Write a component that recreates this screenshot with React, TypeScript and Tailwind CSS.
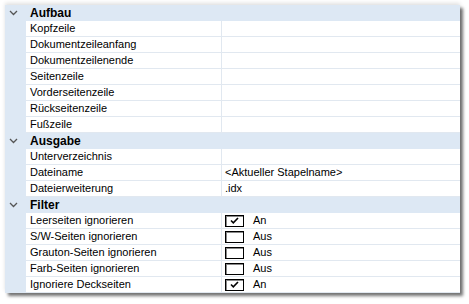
import React from "react";

type Item = { label: string; value?: string; check?: boolean };
type Group = { title: string; items: Item[] };

const groups: Group[] = [
  {
    title: "Aufbau",
    items: [
      { label: "Kopfzeile" },
      { label: "Dokumentzeileanfang" },
      { label: "Dokumentzeilenende" },
      { label: "Seitenzeile" },
      { label: "Vorderseitenzeile" },
      { label: "Rückseitenzeile" },
      { label: "Fußzeile" },
    ],
  },
  {
    title: "Ausgabe",
    items: [
      { label: "Unterverzeichnis" },
      { label: "Dateiname", value: "<Aktueller Stapelname>" },
      { label: "Dateierweiterung", value: ".idx" },
    ],
  },
  {
    title: "Filter",
    items: [
      { label: "Leerseiten ignorieren", check: true },
      { label: "S/W-Seiten ignorieren", check: false },
      { label: "Grauton-Seiten ignorieren", check: false },
      { label: "Farb-Seiten ignorieren", check: false },
      { label: "Ignoriere Deckseiten", check: true },
    ],
  },
];

function Chevron() {
  return (
    <svg width="9" height="6" viewBox="0 0 9 6" className="ml-[4px]">
      <path d="M1 1 L4.5 4.5 L8 1" fill="none" stroke="#555" strokeWidth="1.3" />
    </svg>
  );
}

function CheckBox({ on }: { on: boolean }) {
  return (
    <div className="flex h-[12px] w-[19px] items-center justify-center border border-black bg-white shadow-[inset_1px_1px_0_#888]">
      {on && (
        <svg width="9" height="7" viewBox="0 0 9 7">
          <path d="M1 3.5 L3.3 5.8 L8 1" fill="none" stroke="#000" strokeWidth="1.6" />
        </svg>
      )}
    </div>
  );
}

export default function App() {
  return (
    <div
      className="h-[304px] w-[469px] bg-white pl-[5px] pt-[5px] text-[11px] text-black"
      style={{ fontFamily: "'Liberation Sans', Arial, sans-serif" }}
    >
      <div className="w-[455px] bg-white shadow-[3px_3px_3px_rgba(0,0,0,0.55),0_-2px_4px_rgba(0,0,0,0.12)]">
        {groups.map((g) => (
          <div key={g.title}>
            <div className="flex h-[16px] items-center bg-[#dde8f4]">
              <div className="flex w-[21px] items-center">
                <Chevron />
              </div>
              <span className="pl-[4px] text-[12px] font-bold">{g.title}</span>
            </div>
            {g.items.map((it) => (
              <div key={it.label} className="flex h-[16px]">
                <div className="w-[21px] bg-[#dde8f4]" />
                <div className="flex w-[196px] items-center border-r border-b border-[#e1e8f0] pl-[4px] leading-none">
                  {it.label}
                </div>
                <div className="flex flex-1 items-center border-b border-[#e1e8f0] pl-[3px] leading-none">
                  {it.check !== undefined ? (
                    <div className="flex items-center gap-[9px]">
                      <CheckBox on={it.check} />
                      <span>{it.check ? "An" : "Aus"}</span>
                    </div>
                  ) : (
                    it.value
                  )}
                </div>
              </div>
            ))}
          </div>
        ))}
      </div>
    </div>
  );
}
